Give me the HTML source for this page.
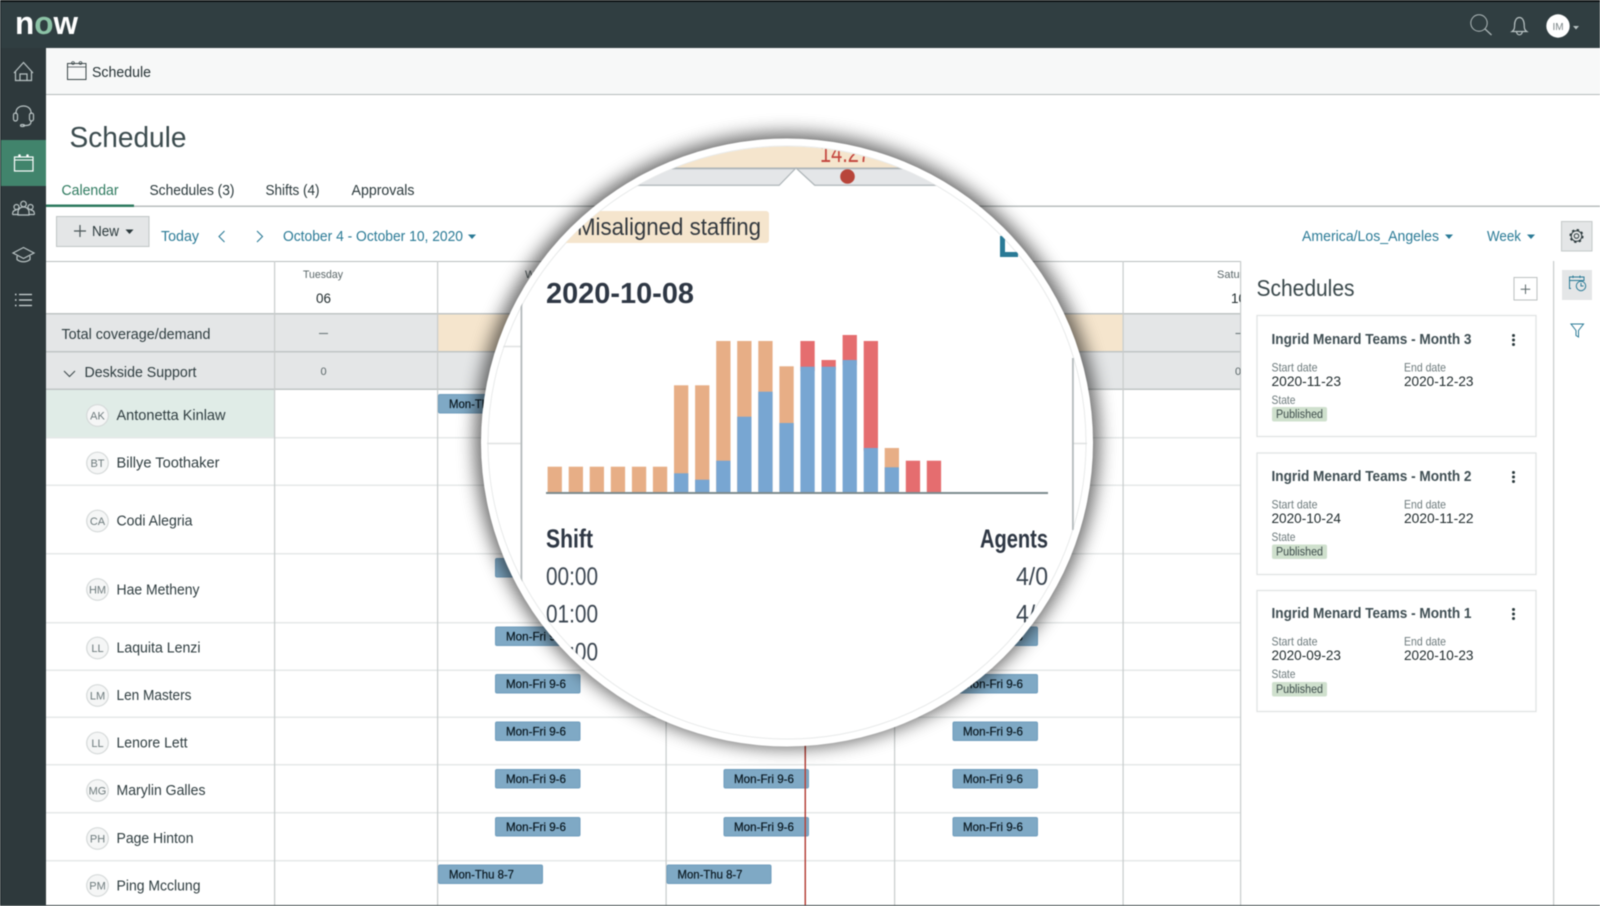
<!DOCTYPE html>
<html><head><meta charset="utf-8"><title>Schedule</title>
<style>
html,body{margin:0;padding:0;background:#fff;width:1600px;height:906px;overflow:hidden}
svg{display:block;filter:blur(.4px)}
text{font-family:"Liberation Sans",sans-serif}
.nm{font-size:15px;fill:#2f3d40}
.av{font-size:11px;fill:#6d7a7c}
.sh{font-size:12px;fill:#08161e;stroke:#08161e;stroke-width:.2}
.bar{fill:#7fa9c5;stroke:#6f9dbd;stroke-width:1}
.lnk{font-size:15px;fill:#2a7a96}
.tab{font-size:15px;fill:#2b393c}
.ct{font-size:14.5px;font-weight:bold;fill:#3f4e53}
.lb{font-size:12px;fill:#6d7a7c}
.vl{font-size:14px;fill:#1f2a2c}
.pb{font-size:11.5px;fill:#3c4b4a}
.ni{fill:none;stroke:#b9c3c4;stroke-width:1.2}
.tp{font-size:25px;fill:#3a4550}
.th{font-size:26px;font-weight:bold;fill:#2e3744}
</style></head>
<body>
<svg width="1600" height="906" viewBox="0 0 1600 906" xmlns="http://www.w3.org/2000/svg">
<defs>
<filter id="bl" x="-10%" y="-10%" width="120%" height="120%"><feGaussianBlur stdDeviation="9"/></filter>
<clipPath id="lens"><ellipse cx="787" cy="442.5" rx="300" ry="296"/></clipPath>
<clipPath id="gridclip"><rect x="46" y="260" width="1194.5" height="646"/></clipPath>
</defs>

<rect width="1600" height="906" fill="#fff"/>

<!-- top bar -->
<rect width="1600" height="48" fill="#303e41"/>
<rect width="1600" height="2" fill="#0e1314"/>
<text x="15" y="34" font-size="32" font-weight="bold" fill="#fff" textLength="63" lengthAdjust="spacingAndGlyphs">n<tspan fill="#8cc3a6">o</tspan>w</text>
<!-- search -->
<circle cx="1479" cy="23" r="8.2" fill="none" stroke="#aeb8b9" stroke-width="1"/>
<path d="M1485 29L1491.500 35" stroke="#aeb8b9" stroke-width="1.200" fill="none"/>
<!-- bell -->
<path class="ni" d="M1512 31.500c2.200-1.500 2.600-3 2.600-6.500c0-4.200 1.800-7.500 4.800-7.500s4.800 3.300 4.800 7.500c0 3.500.4 5 2.600 6.500zM1516.500 32c.5 2 1.500 2.800 2.900 2.800s2.400-.8 2.900-2.800"/>
<!-- avatar -->
<circle cx="1558" cy="26" r="11.700" fill="#fff"/>
<text x="1558" y="30" font-size="10" text-anchor="middle" fill="#7a8486">IM</text>
<path d="M1573 26h6l-3 3.500z" fill="#b9c3c4"/>

<!-- left nav -->
<rect x="0" y="48" width="46" height="858" fill="#2e393c"/>
<rect x="0" y="0" width="1" height="906" fill="#1c2426"/>
<rect x="1" y="140" width="45" height="46" fill="#41846c"/>
<!-- home -->
<path class="ni" d="M14 73L23.500 62.500L33 73M15.500 71V80.500H31.500V71M20 80.500V74H27V80.500"/>
<!-- headset -->
<path class="ni" d="M16 114v-1.500c0-4 3.300-6.500 7.500-6.500s7.500 2.500 7.500 6.500V114M31 121.500c0 3.500-2.500 4-5 4h-3"/>
<rect class="ni" x="13.500" y="113" width="4" height="8" rx="2"/><rect class="ni" x="29.500" y="113" width="4" height="8" rx="2"/>
<ellipse class="ni" cx="22.500" cy="125.500" rx="2" ry="1"/>
<!-- calendar active -->
<rect x="14.500" y="157" width="18.500" height="14" fill="none" stroke="#fff" stroke-width="1.200"/>
<path d="M14.500 160h18.500" stroke="#fff" stroke-width="1"/>
<circle cx="19.500" cy="155.500" r="1.300" fill="#fff"/><circle cx="27.500" cy="155.500" r="1.300" fill="#fff"/>
<!-- people -->
<g class="ni"><circle cx="23.500" cy="204" r="2.800"/><circle cx="16.500" cy="207" r="2.500"/><circle cx="30.500" cy="207" r="2.500"/>
<path d="M12.500 214.500c0-3 1.500-4.500 4-4.500M34.500 214.500c0-3-1.500-4.500-4-4.500M18 215v-3c0-3 2.500-5 5.500-5s5.500 2 5.500 5v3zM12.500 214.500H18M29 214.500h5.500"/></g>
<!-- cap -->
<path class="ni" d="M13 253L23.500 247.500L34 253L23.500 258.500ZM17 256v3.500c3.500 3 9.500 3 13 0V256"/>
<!-- list -->
<path d="M19 294.500H32M19 300H32M19 305.500H32" stroke="#cfd6d7" stroke-width="1.200"/>
<path d="M15 294.500h1.500M15 300h1.500M15 305.500h1.500" stroke="#cfd6d7" stroke-width="1.400"/>

<!-- sub header -->
<rect x="46" y="48" width="1554" height="46" fill="#f7f8f8"/>
<rect x="46" y="94" width="1554" height="1" fill="#b5bbbb"/>
<rect x="67.500" y="63.500" width="18.500" height="16" fill="none" stroke="#3a4648" stroke-width="1"/>
<path d="M67.500 67h18.500" stroke="#3a4648" stroke-width=".8"/>
<circle cx="73" cy="63" r="1.400" fill="none" stroke="#3a4648" stroke-width=".8"/><circle cx="80.500" cy="63" r="1.400" fill="none" stroke="#3a4648" stroke-width=".8"/>
<text x="92" y="77" font-size="15" fill="#263235" textLength="59" lengthAdjust="spacingAndGlyphs">Schedule</text>

<!-- page title -->
<text x="69.500" y="147" font-size="29" fill="#3b4b4e" textLength="117" lengthAdjust="spacingAndGlyphs">Schedule</text>

<!-- tabs -->
<rect x="46" y="205.500" width="1554" height="1.500" fill="#b9bebe"/>
<rect x="46" y="204.500" width="88" height="2.500" fill="#2e7a5f"/>
<text x="61.500" y="195" font-size="15" fill="#2e7a5f" textLength="57" lengthAdjust="spacingAndGlyphs">Calendar</text>
<text class="tab" x="149.500" y="195" textLength="85" lengthAdjust="spacingAndGlyphs">Schedules (3)</text>
<text class="tab" x="265.500" y="195" textLength="54" lengthAdjust="spacingAndGlyphs">Shifts (4)</text>
<text class="tab" x="351.500" y="195" textLength="63" lengthAdjust="spacingAndGlyphs">Approvals</text>

<!-- toolbar -->
<rect x="56.500" y="216.500" width="92.500" height="30" fill="#e4e6e7" stroke="#c0c5c5"/>
<path d="M80 225v12M74 231h12" stroke="#4a5658" stroke-width="1.200"/>
<text x="92" y="236" font-size="15" fill="#2b393c" textLength="27" lengthAdjust="spacingAndGlyphs">New</text>
<path d="M125.500 229.500h8l-4 4.500z" fill="#2b393c"/>
<text class="lnk" x="161" y="241" textLength="38" lengthAdjust="spacingAndGlyphs">Today</text>
<path d="M224.500 231l-5.500 5.500 5.500 5.500M257 231l5.500 5.500-5.500 5.500" fill="none" stroke="#2a7a96" stroke-width="1.100"/>
<text class="lnk" x="283" y="241" textLength="180" lengthAdjust="spacingAndGlyphs">October 4 - October 10, 2020</text>
<path d="M468 234.500h8l-4 4.500z" fill="#2a7a96"/>
<text class="lnk" x="1302" y="241" textLength="137" lengthAdjust="spacingAndGlyphs">America/Los_Angeles</text>
<path d="M1445 234.500h8l-4 4.500z" fill="#2a7a96"/>
<text class="lnk" x="1487" y="241" textLength="34" lengthAdjust="spacingAndGlyphs">Week</text>
<path d="M1527 234.500h8l-4 4.500z" fill="#2a7a96"/>
<rect x="1561.500" y="221.500" width="30.500" height="29.500" fill="#e4e6e7" stroke="#c4c9c9"/>
<circle cx="1576.500" cy="236" r="2.300" fill="none" stroke="#2b393c" stroke-width="1"/>
<circle cx="1576.500" cy="236" r="5.300" fill="none" stroke="#2b393c" stroke-width="1"/>
<circle cx="1576.500" cy="236" r="6.300" fill="none" stroke="#2b393c" stroke-width="1.500" stroke-dasharray="2.400 2.550"/>

<!-- grid -->
<rect x="46" y="261" width="1195" height="1" fill="#b9bebe"/>
<rect x="46" y="314" width="1195" height="75" fill="#e4e6e7"/>
<rect x="437" y="314" width="686" height="37.500" fill="#f5e5cd"/>
<rect x="46" y="390" width="228" height="47.500" fill="#e0ece7"/>
<g fill="#c0c5c5">
<rect x="46" y="313" width="1195" height="1.500"/><rect x="46" y="351" width="1195" height="1.500"/><rect x="46" y="388.500" width="1195" height="1.500"/>
</g>
<g fill="#e5e8e8">
<rect x="46" y="437" width="1195" height="1.500"/><rect x="46" y="484.500" width="1195" height="1.500"/><rect x="46" y="553" width="1195" height="1.500"/>
<rect x="46" y="622" width="1195" height="1.500"/><rect x="46" y="669.500" width="1195" height="1.500"/><rect x="46" y="716.500" width="1195" height="1.500"/>
<rect x="46" y="764" width="1195" height="1.500"/><rect x="46" y="812" width="1195" height="1.500"/><rect x="46" y="860" width="1195" height="1.500"/>
</g>
<g fill="#c8cccc">
<rect x="274" y="261" width="1.200" height="645"/><rect x="437" y="261" width="1.200" height="645"/><rect x="665.500" y="261" width="1.200" height="645"/>
<rect x="894" y="261" width="1.200" height="645"/><rect x="1122.500" y="261" width="1.200" height="645"/>
<rect x="1240" y="261" width="1.200" height="645"/><rect x="1553" y="261" width="1.200" height="645"/>
</g>

<!-- header text -->
<text x="303" y="278" font-size="11" fill="#5a6668" textLength="40" lengthAdjust="spacingAndGlyphs">Tuesday</text>
<text x="316" y="303" font-size="14" fill="#1f2a2c" textLength="15" lengthAdjust="spacingAndGlyphs">06</text>
<text x="525" y="278" font-size="11" fill="#5a6668">Wednesday</text>
<g clip-path="url(#gridclip)">
<text x="1217" y="278" font-size="11" fill="#5a6668" textLength="44" lengthAdjust="spacingAndGlyphs">Saturday</text>
<text x="1231" y="303" font-size="14" fill="#1f2a2c" textLength="15" lengthAdjust="spacingAndGlyphs">10</text>
<path d="M1235.500 333.500h9" stroke="#6d7a7c" stroke-width="1.100"/>
<text x="1235" y="375" font-size="11" fill="#5a6668">0</text>
</g>
<text x="61.500" y="339" font-size="15" fill="#2f3d40" textLength="149" lengthAdjust="spacingAndGlyphs">Total coverage/demand</text>
<path d="M319 333.500h9" stroke="#6d7a7c" stroke-width="1.100"/>
<path d="M64 371l5.500 5.500 5.500-5.500" fill="none" stroke="#3a4648" stroke-width="1"/>
<text x="84.500" y="377" font-size="15" fill="#2f3d40" textLength="112" lengthAdjust="spacingAndGlyphs">Deskside Support</text>
<text x="320.500" y="375" font-size="11" fill="#5a6668">0</text>

<!-- people -->
<g fill="#f5f6f6" stroke="#d5d9d9" stroke-width="1.200">
<circle cx="97.500" cy="415.500" r="10.800"/><circle cx="97.500" cy="463" r="10.800"/><circle cx="97.500" cy="521" r="10.800"/><circle cx="97.500" cy="589.500" r="10.800"/>
<circle cx="97.500" cy="648" r="10.800"/><circle cx="97.500" cy="695.500" r="10.800"/><circle cx="97.500" cy="743" r="10.800"/><circle cx="97.500" cy="790.500" r="10.800"/><circle cx="97.500" cy="838.500" r="10.800"/><circle cx="97.500" cy="885.500" r="10.800"/>
</g>
<g text-anchor="middle">
<text class="av" x="97.500" y="419.500">AK</text><text class="av" x="97.500" y="467">BT</text><text class="av" x="97.500" y="525">CA</text><text class="av" x="97.500" y="593.500">HM</text>
<text class="av" x="97.500" y="652">LL</text><text class="av" x="97.500" y="699.500">LM</text><text class="av" x="97.500" y="747">LL</text><text class="av" x="97.500" y="794.500">MG</text><text class="av" x="97.500" y="842.500">PH</text><text class="av" x="97.500" y="889.500">PM</text>
</g>
<text class="nm" x="116.500" y="420" textLength="109" lengthAdjust="spacingAndGlyphs">Antonetta Kinlaw</text>
<text class="nm" x="116.500" y="467.500" textLength="103" lengthAdjust="spacingAndGlyphs">Billye Toothaker</text>
<text class="nm" x="116.500" y="525.500" textLength="76" lengthAdjust="spacingAndGlyphs">Codi Alegria</text>
<text class="nm" x="116.500" y="594.500" textLength="83" lengthAdjust="spacingAndGlyphs">Hae Metheny</text>
<text class="nm" x="116.500" y="652.500" textLength="84" lengthAdjust="spacingAndGlyphs">Laquita Lenzi</text>
<text class="nm" x="116.500" y="700" textLength="75" lengthAdjust="spacingAndGlyphs">Len Masters</text>
<text class="nm" x="116.500" y="747.500" textLength="71" lengthAdjust="spacingAndGlyphs">Lenore Lett</text>
<text class="nm" x="116.500" y="795" textLength="89" lengthAdjust="spacingAndGlyphs">Marylin Galles</text>
<text class="nm" x="116.500" y="843" textLength="77" lengthAdjust="spacingAndGlyphs">Page Hinton</text>
<text class="nm" x="116.500" y="890.500" textLength="84" lengthAdjust="spacingAndGlyphs">Ping Mcclung</text>

<!-- shift bars -->
<rect class="bar" x="438.500" y="394.500" width="104" height="18.500" rx="1.500"/><text class="sh" x="449" y="408" textLength="65" lengthAdjust="spacingAndGlyphs">Mon-Thu 8-7</text>
<rect class="bar" x="495.500" y="558.500" width="84.500" height="18.500" rx="1.500"/>
<rect class="bar" x="495.500" y="627" width="84.500" height="18.500" rx="1.500"/><text class="sh" x="506" y="640.500" textLength="60" lengthAdjust="spacingAndGlyphs">Mon-Fri 9-6</text>
<rect class="bar" x="953" y="627" width="84.500" height="18.500" rx="1.500"/><text class="sh" x="963" y="640.500" textLength="60" lengthAdjust="spacingAndGlyphs">Mon-Fri 9-6</text>
<rect class="bar" x="495.500" y="674.500" width="84.500" height="18.500" rx="1.500"/><text class="sh" x="506" y="688" textLength="60" lengthAdjust="spacingAndGlyphs">Mon-Fri 9-6</text>
<rect class="bar" x="953" y="674.500" width="84.500" height="18.500" rx="1.500"/><text class="sh" x="963" y="688" textLength="60" lengthAdjust="spacingAndGlyphs">Mon-Fri 9-6</text>
<rect class="bar" x="495.500" y="722" width="84.500" height="18.500" rx="1.500"/><text class="sh" x="506" y="735.500" textLength="60" lengthAdjust="spacingAndGlyphs">Mon-Fri 9-6</text>
<rect class="bar" x="953" y="722" width="84.500" height="18.500" rx="1.500"/><text class="sh" x="963" y="735.500" textLength="60" lengthAdjust="spacingAndGlyphs">Mon-Fri 9-6</text>
<rect class="bar" x="495.500" y="769.500" width="84.500" height="18.500" rx="1.500"/><text class="sh" x="506" y="783" textLength="60" lengthAdjust="spacingAndGlyphs">Mon-Fri 9-6</text>
<rect class="bar" x="724" y="769.500" width="84.500" height="18.500" rx="1.500"/><text class="sh" x="734" y="783" textLength="60" lengthAdjust="spacingAndGlyphs">Mon-Fri 9-6</text>
<rect class="bar" x="953" y="769.500" width="84.500" height="18.500" rx="1.500"/><text class="sh" x="963" y="783" textLength="60" lengthAdjust="spacingAndGlyphs">Mon-Fri 9-6</text>
<rect class="bar" x="495.500" y="817.500" width="84.500" height="18.500" rx="1.500"/><text class="sh" x="506" y="831" textLength="60" lengthAdjust="spacingAndGlyphs">Mon-Fri 9-6</text>
<rect class="bar" x="724" y="817.500" width="84.500" height="18.500" rx="1.500"/><text class="sh" x="734" y="831" textLength="60" lengthAdjust="spacingAndGlyphs">Mon-Fri 9-6</text>
<rect class="bar" x="953" y="817.500" width="84.500" height="18.500" rx="1.500"/><text class="sh" x="963" y="831" textLength="60" lengthAdjust="spacingAndGlyphs">Mon-Fri 9-6</text>
<rect class="bar" x="438.500" y="865" width="104" height="18.500" rx="1.500"/><text class="sh" x="449" y="878.500" textLength="65" lengthAdjust="spacingAndGlyphs">Mon-Thu 8-7</text>
<rect class="bar" x="667" y="865" width="104" height="18.500" rx="1.500"/><text class="sh" x="677.500" y="878.500" textLength="65" lengthAdjust="spacingAndGlyphs">Mon-Thu 8-7</text>

<!-- time line -->
<rect x="804.500" y="700" width="1.500" height="206" fill="#b5443c"/>

<!-- bottom edge -->
<rect x="0" y="905" width="1600" height="1" fill="#3c4648"/>

<!-- right panel -->
<text x="1256.500" y="296" font-size="23" fill="#3a484b" textLength="98" lengthAdjust="spacingAndGlyphs">Schedules</text>
<rect x="1514" y="277.500" width="23" height="22.500" fill="#fff" stroke="#bcc1c1"/>
<path d="M1525.500 284.500v9.500M1520.700 289.200h9.500" stroke="#5a6668" stroke-width="1"/>

<g fill="#fff" stroke="#dfe2e2" stroke-width="1.200">
<rect x="1257" y="315.500" width="279" height="121"/><rect x="1257" y="453" width="279" height="121.500"/><rect x="1257" y="590.500" width="279" height="121"/>
</g>
<!-- card 1 -->
<text class="ct" x="1271.500" y="344" textLength="200" lengthAdjust="spacingAndGlyphs">Ingrid Menard Teams - Month 3</text>
<circle cx="1513.500" cy="335.500" r="1.500" fill="#2b393c"/><circle cx="1513.500" cy="340" r="1.500" fill="#2b393c"/><circle cx="1513.500" cy="344.500" r="1.500" fill="#2b393c"/>
<text class="lb" x="1271.500" y="371.500" textLength="46" lengthAdjust="spacingAndGlyphs">Start date</text><text class="lb" x="1404" y="371.500" textLength="42" lengthAdjust="spacingAndGlyphs">End date</text>
<text class="vl" x="1271.500" y="386" textLength="69.500" lengthAdjust="spacingAndGlyphs">2020-11-23</text><text class="vl" x="1404" y="386" textLength="69.500" lengthAdjust="spacingAndGlyphs">2020-12-23</text>
<text class="lb" x="1271.500" y="404" textLength="24" lengthAdjust="spacingAndGlyphs">State</text>
<rect x="1272" y="407" width="55" height="14.500" rx="2" fill="#cfe0cd"/><text class="pb" x="1276" y="418" textLength="47" lengthAdjust="spacingAndGlyphs">Published</text>
<!-- card 2 -->
<text class="ct" x="1271.500" y="481" textLength="200" lengthAdjust="spacingAndGlyphs">Ingrid Menard Teams - Month 2</text>
<circle cx="1513.500" cy="472.500" r="1.500" fill="#2b393c"/><circle cx="1513.500" cy="477" r="1.500" fill="#2b393c"/><circle cx="1513.500" cy="481.500" r="1.500" fill="#2b393c"/>
<text class="lb" x="1271.500" y="508.500" textLength="46" lengthAdjust="spacingAndGlyphs">Start date</text><text class="lb" x="1404" y="508.500" textLength="42" lengthAdjust="spacingAndGlyphs">End date</text>
<text class="vl" x="1271.500" y="523" textLength="69.500" lengthAdjust="spacingAndGlyphs">2020-10-24</text><text class="vl" x="1404" y="523" textLength="69.500" lengthAdjust="spacingAndGlyphs">2020-11-22</text>
<text class="lb" x="1271.500" y="541" textLength="24" lengthAdjust="spacingAndGlyphs">State</text>
<rect x="1272" y="544.500" width="55" height="14.500" rx="2" fill="#cfe0cd"/><text class="pb" x="1276" y="555.500" textLength="47" lengthAdjust="spacingAndGlyphs">Published</text>
<!-- card 3 -->
<text class="ct" x="1271.500" y="618" textLength="200" lengthAdjust="spacingAndGlyphs">Ingrid Menard Teams - Month 1</text>
<circle cx="1513.500" cy="609.500" r="1.500" fill="#2b393c"/><circle cx="1513.500" cy="614" r="1.500" fill="#2b393c"/><circle cx="1513.500" cy="618.500" r="1.500" fill="#2b393c"/>
<text class="lb" x="1271.500" y="645.500" textLength="46" lengthAdjust="spacingAndGlyphs">Start date</text><text class="lb" x="1404" y="645.500" textLength="42" lengthAdjust="spacingAndGlyphs">End date</text>
<text class="vl" x="1271.500" y="660" textLength="69.500" lengthAdjust="spacingAndGlyphs">2020-09-23</text><text class="vl" x="1404" y="660" textLength="69.500" lengthAdjust="spacingAndGlyphs">2020-10-23</text>
<text class="lb" x="1271.500" y="678" textLength="24" lengthAdjust="spacingAndGlyphs">State</text>
<rect x="1272" y="682" width="55" height="14.500" rx="2" fill="#cfe0cd"/><text class="pb" x="1276" y="693" textLength="47" lengthAdjust="spacingAndGlyphs">Published</text>

<!-- right rail -->
<rect x="1562" y="270" width="30" height="30" fill="#e4e6e7"/>
<path d="M1571 288.500h-1.500v-11.500h14.500v4M1569.500 280.500h14.500M1573 275.500v2.500M1580 275.500v2.500" fill="none" stroke="#2a7a96" stroke-width="1"/>
<circle cx="1581" cy="286" r="4.700" fill="#e4e6e7" stroke="#2a7a96" stroke-width="1"/>
<path d="M1581 283v3h2.500" fill="none" stroke="#2a7a96" stroke-width="1"/>
<path d="M1571 324h12.500l-5 6.500v6.500l-2.500-1.500v-5z" fill="none" stroke="#2a7a96" stroke-width="1"/>

<!-- magnifier -->
<ellipse cx="787" cy="440.500" rx="312" ry="307.500" fill="#000" opacity=".6" filter="url(#bl)"/>
<ellipse cx="787" cy="442.500" rx="306" ry="304" fill="#fff"/>
<ellipse cx="787" cy="442.500" rx="299" ry="296.500" fill="#fff" stroke="#e8eaea" stroke-width="1"/>
<g clip-path="url(#lens)">
<rect x="480" y="140" width="620" height="28" fill="#f5e5cd"/>
<text x="820" y="162" font-size="26" fill="#c4473f" textLength="50" lengthAdjust="spacingAndGlyphs">14:27</text>
<rect x="480" y="168" width="620" height="17.500" fill="#e4e6e8"/>
<rect x="480" y="167.500" width="620" height="1.800" fill="#aeb5b8"/>
<rect x="480" y="184.500" width="620" height="1.500" fill="#b9bfc2"/>
<path d="M779 186L796 168L815 186Z" fill="#fff"/>
<path d="M779 185.500L796 168L815 185.500" fill="none" stroke="#aeb5b8" stroke-width="1.200"/>
<circle cx="847.500" cy="176.500" r="7.300" fill="#b8453a"/>

<rect x="480" y="211" width="289" height="32" rx="3" fill="#f5e5cd"/>
<text x="577" y="235" font-size="24" fill="#33393f" textLength="184" lengthAdjust="spacingAndGlyphs">Misaligned staffing</text>
<path d="M1002.500 236V254.500H1018" fill="none" stroke="#2a7a96" stroke-width="5"/>

<path d="M480 346.500H521M1073 350H1090M480 443.500H521M1073 443.500H1090" stroke="#dfe2e2" stroke-width="1.500"/>
<rect x="520.500" y="300" width="1.800" height="285" fill="#b4babc"/>
<rect x="1072" y="358" width="1.800" height="172" fill="#b4babc"/>

<text x="546" y="303" font-size="29" font-weight="bold" fill="#2e3744" textLength="148" lengthAdjust="spacingAndGlyphs">2020-10-08</text>

<!-- chart -->
<g fill="#e7ae86">
<rect x="547.600" y="466.700" width="14.300" height="25.500"/><rect x="568.700" y="466.700" width="14.300" height="25.500"/><rect x="589.700" y="466.700" width="14.300" height="25.500"/>
<rect x="610.800" y="466.700" width="14.300" height="25.500"/><rect x="631.900" y="466.700" width="14.300" height="25.500"/><rect x="652.900" y="466.700" width="14.300" height="25.500"/>
<rect x="674" y="385.300" width="14.300" height="106"/><rect x="695.100" y="385.300" width="14.300" height="106"/>
<rect x="716.200" y="341" width="14.300" height="150"/><rect x="737.200" y="341" width="14.300" height="150"/><rect x="758.300" y="341" width="14.300" height="150"/>
<rect x="779.400" y="366.300" width="14.300" height="125"/>
<rect x="884.700" y="448" width="14.300" height="44"/>
</g>
<g fill="#e56d6f">
<rect x="800.400" y="341" width="14.300" height="30"/><rect x="821.500" y="360" width="14.300" height="10"/><rect x="842.600" y="335" width="14.300" height="30"/>
<rect x="863.700" y="341" width="14.300" height="110"/>
<rect x="905.800" y="460.700" width="14.300" height="31.500"/><rect x="926.800" y="460.700" width="14.300" height="31.500"/>
</g>
<g fill="#78a6d2">
<rect x="674" y="473.300" width="14.300" height="18.900"/><rect x="695.100" y="479.700" width="14.300" height="12.500"/><rect x="716.200" y="460.700" width="14.300" height="31.500"/>
<rect x="737.200" y="416.700" width="14.300" height="75.500"/><rect x="758.300" y="391.700" width="14.300" height="100.500"/><rect x="779.400" y="423" width="14.300" height="69.200"/>
<rect x="800.400" y="366.700" width="14.300" height="125.500"/><rect x="821.500" y="366.700" width="14.300" height="125.500"/><rect x="842.600" y="360" width="14.300" height="132.200"/>
<rect x="863.700" y="448" width="14.300" height="44.200"/><rect x="884.700" y="467.300" width="14.300" height="24.900"/>
</g>
<rect x="546" y="492" width="502" height="2" fill="#7d8b8e"/>

<text class="th" x="546" y="547.500" textLength="47" lengthAdjust="spacingAndGlyphs">Shift</text>
<text class="th" x="980" y="547.500" textLength="68" lengthAdjust="spacingAndGlyphs">Agents</text>
<text class="tp" x="546" y="585" textLength="52" lengthAdjust="spacingAndGlyphs">00:00</text>
<text class="tp" x="1016" y="585" textLength="32" lengthAdjust="spacingAndGlyphs">4/0</text>
<text class="tp" x="546" y="622.500" textLength="52" lengthAdjust="spacingAndGlyphs">01:00</text>
<text class="tp" x="1016" y="622.500" textLength="32" lengthAdjust="spacingAndGlyphs">4/0</text>
<text class="tp" x="546" y="660.500" textLength="52" lengthAdjust="spacingAndGlyphs">02:00</text>
</g>
</svg>
</body></html>
